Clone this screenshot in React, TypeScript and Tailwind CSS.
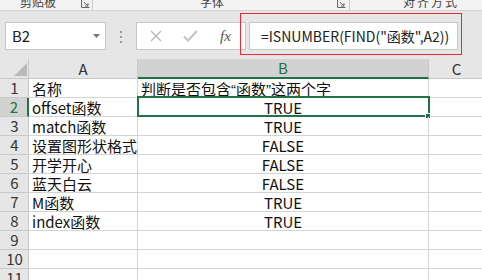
import React from "react";

const FONT = "font-['Noto_Sans_CJK_SC','Noto_Sans',sans-serif]";

const Q = ({ c }: { c: string }) => (
  <span className="font-['Liberation_Sans',sans-serif]">{c}</span>
);

const rows: [React.ReactNode, React.ReactNode][] = [
  ["名称", <>判断是否包含<Q c={"\u201c"} />函数<Q c={"\u201d"} />这两个字</>],
  ["offset函数", "TRUE"],
  ["match函数", "TRUE"],
  ["设置图形状格式", "FALSE"],
  ["开学开心", "FALSE"],
  ["蓝天白云", "FALSE"],
  ["M函数", "TRUE"],
  ["index函数", "TRUE"],
  ["", ""],
  ["", ""],
  ["", ""],
];

function Launcher() {
  return (
    <svg width="9" height="9" viewBox="0 0 9 9" className="shrink-0">
      <path d="M0.5 0 V8.5 H8.5" fill="none" stroke="#666" strokeWidth="1" />
      <path d="M3 3 L7 7 M7 4 V7 H4" fill="none" stroke="#666" strokeWidth="1" />
    </svg>
  );
}

export default function App() {
  return (
    <div className={`w-[482px] h-[280px] overflow-hidden bg-white ${FONT}`}>
      {/* ribbon group labels strip */}
      <div className="h-[11px] bg-[#f3f3f3] border-b border-[#d5d5d5] flex items-end overflow-hidden text-[12px] leading-[12px] text-[#444]">
        <span className="ml-[20px] mb-[2px]">剪贴板</span>
        <div className="ml-[25px] mb-[2px]"><Launcher /></div>
        <div className="ml-[2px] w-px h-[10px] bg-[#c8c8c8]" />
        <span className="ml-[107px] mb-[2px]">字体</span>
        <div className="ml-[113px] mb-[2px]"><Launcher /></div>
        <div className="ml-[3px] w-px h-[10px] bg-[#c8c8c8]" />
        <span className="ml-[53px] mb-[2px] tracking-[2px]">对齐方式</span>
      </div>

      {/* formula bar */}
      <div className="h-[48px] bg-[#e6e6e6] relative flex items-start pt-[11px]">
        <div className="ml-[5px] w-[101px] h-[28px] bg-white border border-[#c6c6c6] flex items-center pl-[6px] pr-[5px] text-[15px] text-[#222]">
          <span className="flex-1">B2</span>
          <svg width="7" height="4" viewBox="0 0 7 4"><path d="M0 0 H7 L3.5 4 Z" fill="#777" /></svg>
        </div>
        <div className="ml-[14px] mt-[9px] flex flex-col gap-[3px]">
          <div className="w-[2px] h-[2px] bg-[#9a9a9a]" />
          <div className="w-[2px] h-[2px] bg-[#9a9a9a]" />
          <div className="w-[2px] h-[2px] bg-[#9a9a9a]" />
        </div>
        <div className="ml-[14px] w-[110px] h-[28px] bg-white border border-[#c6c6c6] flex items-center">
          <svg width="12" height="12" viewBox="0 0 12 12" className="ml-[13px]">
            <path d="M1 1 L11 11 M11 1 L1 11" stroke="#b4b4b4" strokeWidth="1.3" fill="none" />
          </svg>
          <svg width="15" height="12" viewBox="0 0 15 12" className="ml-[21px]">
            <path d="M1 6.5 L5 10.5 L14 1" stroke="#c4c4c4" strokeWidth="2.2" fill="none" />
          </svg>
          <span className="ml-[22px] font-['Liberation_Serif',serif] italic text-[15px] text-[#555] leading-none">fx</span>
        </div>
        <div className="ml-[3px] w-[209px] h-[28px] bg-white border border-[#c6c6c6] flex items-center pl-[11px] text-[14px] text-[#222] whitespace-nowrap">
          =ISNUMBER(FIND("函数",A2))
        </div>
        <div className="absolute left-[240px] top-[2px] w-[222px] h-[42px] border border-[#ee2a2f]" />
      </div>

      {/* grid */}
      <div className="text-[15px] leading-[18px]">
        {/* column headers */}
        <div className="flex h-[20px] bg-[#e6e6e6] text-[#333]">
          <div className="w-[29px] shrink-0 border-r border-b border-[#c9c9c9] relative">
            <svg width="14" height="14" viewBox="0 0 14 14" className="absolute left-[14px] top-[4px]">
              <path d="M13 0 V13 H0 Z" fill="#b9b9b9" />
            </svg>
          </div>
          <div className="w-[109px] shrink-0 border-r border-b border-[#c9c9c9] flex items-center justify-center">A</div>
          <div className="w-[291px] shrink-0 border-r border-[#c9c9c9] border-b-2 border-b-[#217346] bg-[#d2d2d2] flex items-center justify-center text-[#217346]">B</div>
          <div className="flex-1 border-b border-[#c9c9c9] flex items-center justify-center pl-[2px]">C</div>
        </div>
        {rows.map(([a, b], i) => {
          const sel = i === 1;
          return (
            <div key={i} className="flex h-[19px]">
              <div
                className={`w-[29px] shrink-0 border-b border-[#c9c9c9] flex items-center justify-center pl-[1px] ${
                  sel ? "bg-[#d2d2d2] border-r-2 border-r-[#217346] text-[#217346]" : "bg-[#e6e6e6] border-r text-[#333]"
                }`}
              >
                {i + 1}
              </div>
              <div className="w-[109px] shrink-0 border-r border-b border-[#d4d4d4] pl-[3px] pt-[1px] whitespace-nowrap overflow-visible text-[#111]">
                {a}
              </div>
              <div
                className={`w-[291px] shrink-0 border-r border-b border-[#d4d4d4] pt-[1px] whitespace-nowrap text-[#111] relative ${
                  i === 0 ? "pl-[3px]" : "text-center"
                }`}
              >
                {b}
                {sel && (
                  <div className="absolute -top-[2px] -left-[1px] -right-[2px] -bottom-[1px] border-2 border-[#217346]">
                    <div className="absolute -right-[3px] -bottom-[4px] w-[6px] h-[6px] bg-[#217346] border border-white" />
                  </div>
                )}
              </div>
              <div className="flex-1 border-b border-[#d4d4d4]" />
            </div>
          );
        })}
      </div>
    </div>
  );
}
